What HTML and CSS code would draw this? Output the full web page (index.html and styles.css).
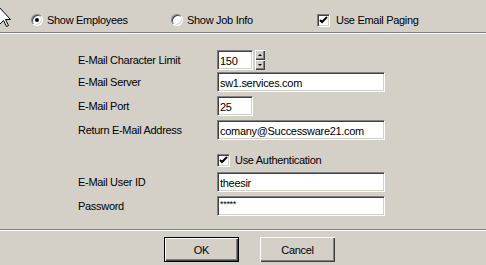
FILE: index.html
```html
<!DOCTYPE html>
<html lang="en">
<head>
  <meta charset="UTF-8">
  <title>E-Mail Settings</title>
  <link rel="stylesheet" href="styles.css">
</head>
<body>
  <svg class="cursor" width="14" height="26" viewBox="0 0 14 26">
    <polygon points="0.5,6.5 0.5,23.5 4.5,19.5 7.5,25.5 9.5,24.5 6.5,18.5 11.5,18.5" fill="#fff" stroke="#000" stroke-width="1"/>
  </svg>

  <div class="toolbar">
    <label class="opt opt-emp"><span class="radio checked"></span>Show Employees</label>
    <label class="opt opt-job"><span class="radio"></span>Show Job Info</label>
    <label class="opt opt-page"><span class="check"><svg width="9" height="9" viewBox="0 0 9 9"><path d="M1 4 L3 6 L8 1" fill="none" stroke="#000" stroke-width="2"/></svg></span>Use Email Paging</label>
  </div>
  <div class="sep"></div>

  <div class="form">
    <div class="row row-first">
      <span class="lbl">E-Mail Character Limit</span>
      <input class="field small" type="text" value="150">
      <span class="spin">
        <span class="spin-btn"><span class="tri up"></span></span>
        <span class="spin-btn"><span class="tri down"></span></span>
      </span>
    </div>
    <div class="row row-tight">
      <span class="lbl">E-Mail Server</span>
      <input class="field wide" type="text" value="sw1.services.com">
    </div>
    <div class="row">
      <span class="lbl">E-Mail Port</span>
      <input class="field small" type="text" value="25">
    </div>
    <div class="row">
      <span class="lbl">Return E-Mail Address</span>
      <input class="field wide" type="text" value="comany@Successware21.com">
    </div>
    <div class="row row-auth">
      <span class="lbl"></span>
      <label class="opt"><span class="check"><svg width="9" height="9" viewBox="0 0 9 9"><path d="M1 4 L3 6 L8 1" fill="none" stroke="#000" stroke-width="2"/></svg></span>Use Authentication</label>
    </div>
    <div class="row row-tight">
      <span class="lbl">E-Mail User ID</span>
      <input class="field wide" type="text" value="theesir">
    </div>
    <div class="row">
      <span class="lbl">Password</span>
      <input class="field wide secret" type="text" value="*****">
    </div>
  </div>

  <div class="sep sep-bottom"></div>
  <div class="buttons">
    <button class="btn btn-default">OK</button>
    <button class="btn">Cancel</button>
  </div>
</body>
</html>
```

FILE: styles.css
```css
body {
  margin: 0;
  width: 486px;
  height: 265px;
  overflow: hidden;
  background: #d4d0c8;
  color: #000;
  font-family: "Liberation Sans", Arial, sans-serif;
  font-size: 11px;
  letter-spacing: -0.3px;
  position: relative;
}

.cursor {
  position: absolute;
  left: -1px;
  top: 1px;
}

.toolbar {
  display: flex;
  align-items: center;
  height: 24px;
  padding: 8px 0 0 31px;
}

.opt {
  display: flex;
  align-items: center;
  gap: 5px;
}

.opt-emp {
  width: 140px;
  gap: 4px;
}

.opt-job {
  width: 146px;
  gap: 4px;
}

.opt-page {
  gap: 6px;
}

.radio {
  width: 12px;
  height: 12px;
  box-sizing: border-box;
  border-radius: 50%;
  border: 1px solid;
  border-color: #808080 #fff #fff #808080;
  box-shadow: inset 1px 1px #404040, inset -1px -1px #d4d0c8;
  background: #fff;
  display: flex;
  align-items: center;
  justify-content: center;
}

.radio.checked::after {
  content: '';
  width: 4px;
  height: 4px;
  border-radius: 50%;
  background: #000;
}

.check {
  width: 13px;
  height: 13px;
  box-sizing: border-box;
  border: 1px solid;
  border-color: #808080 #fff #fff #808080;
  box-shadow: inset 1px 1px #404040, inset -1px -1px #d4d0c8;
  background: #fff;
  display: flex;
  align-items: center;
  justify-content: center;
}

.sep {
  height: 0;
  border-top: 1px solid #808080;
  border-bottom: 1px solid #fff;
}

.form {
  padding: 16px 0 0 78px;
}

.row {
  display: flex;
  align-items: center;
  height: 20px;
  margin-top: 4px;
}

.row-first {
  margin-top: 0;
}

.row-tight {
  margin-top: 2px;
}

.row-auth {
  margin-top: 10px;
}

.lbl {
  width: 139px;
  flex: none;
}

.field {
  height: 20px;
  box-sizing: border-box;
  border: 1px solid;
  border-color: #808080 #fff #fff #808080;
  box-shadow: inset 1px 1px #404040, inset -1px -1px #d4d0c8;
  background: #fff;
  padding: 1px 2px 0;
  margin: 0;
  font: inherit;
  letter-spacing: inherit;
  color: #000;
  outline: none;
}

.small {
  width: 36px;
}

.wide {
  width: 168px;
}

.secret {
  font-size: 9px;
  padding-bottom: 6px;
}

.spin {
  display: flex;
  flex-direction: column;
  margin-left: 2px;
}

.spin-btn {
  width: 10px;
  height: 10px;
  box-sizing: border-box;
  background: #d4d0c8;
  box-shadow: inset 1px 1px #fff, inset -1px -1px #404040, inset -2px -2px #808080;
  display: flex;
  align-items: center;
  justify-content: center;
}

.tri {
  width: 0;
  height: 0;
  border-left: 2px solid transparent;
  border-right: 2px solid transparent;
}

.tri.up {
  border-bottom: 2px solid #000;
}

.tri.down {
  border-top: 2px solid #000;
}

.sep-bottom {
  margin-top: 13px;
}

.buttons {
  display: flex;
  gap: 21px;
  padding: 6px 0 0 164px;
}

.btn {
  width: 75px;
  height: 25px;
  box-sizing: border-box;
  border: none;
  background: #d4d0c8;
  box-shadow: inset 1px 1px #fff, inset -1px -1px #404040, inset -2px -2px #808080;
  font: inherit;
  letter-spacing: inherit;
  color: #000;
  padding: 0;
}

.btn-default {
  border: 1px solid #000;
}
```
